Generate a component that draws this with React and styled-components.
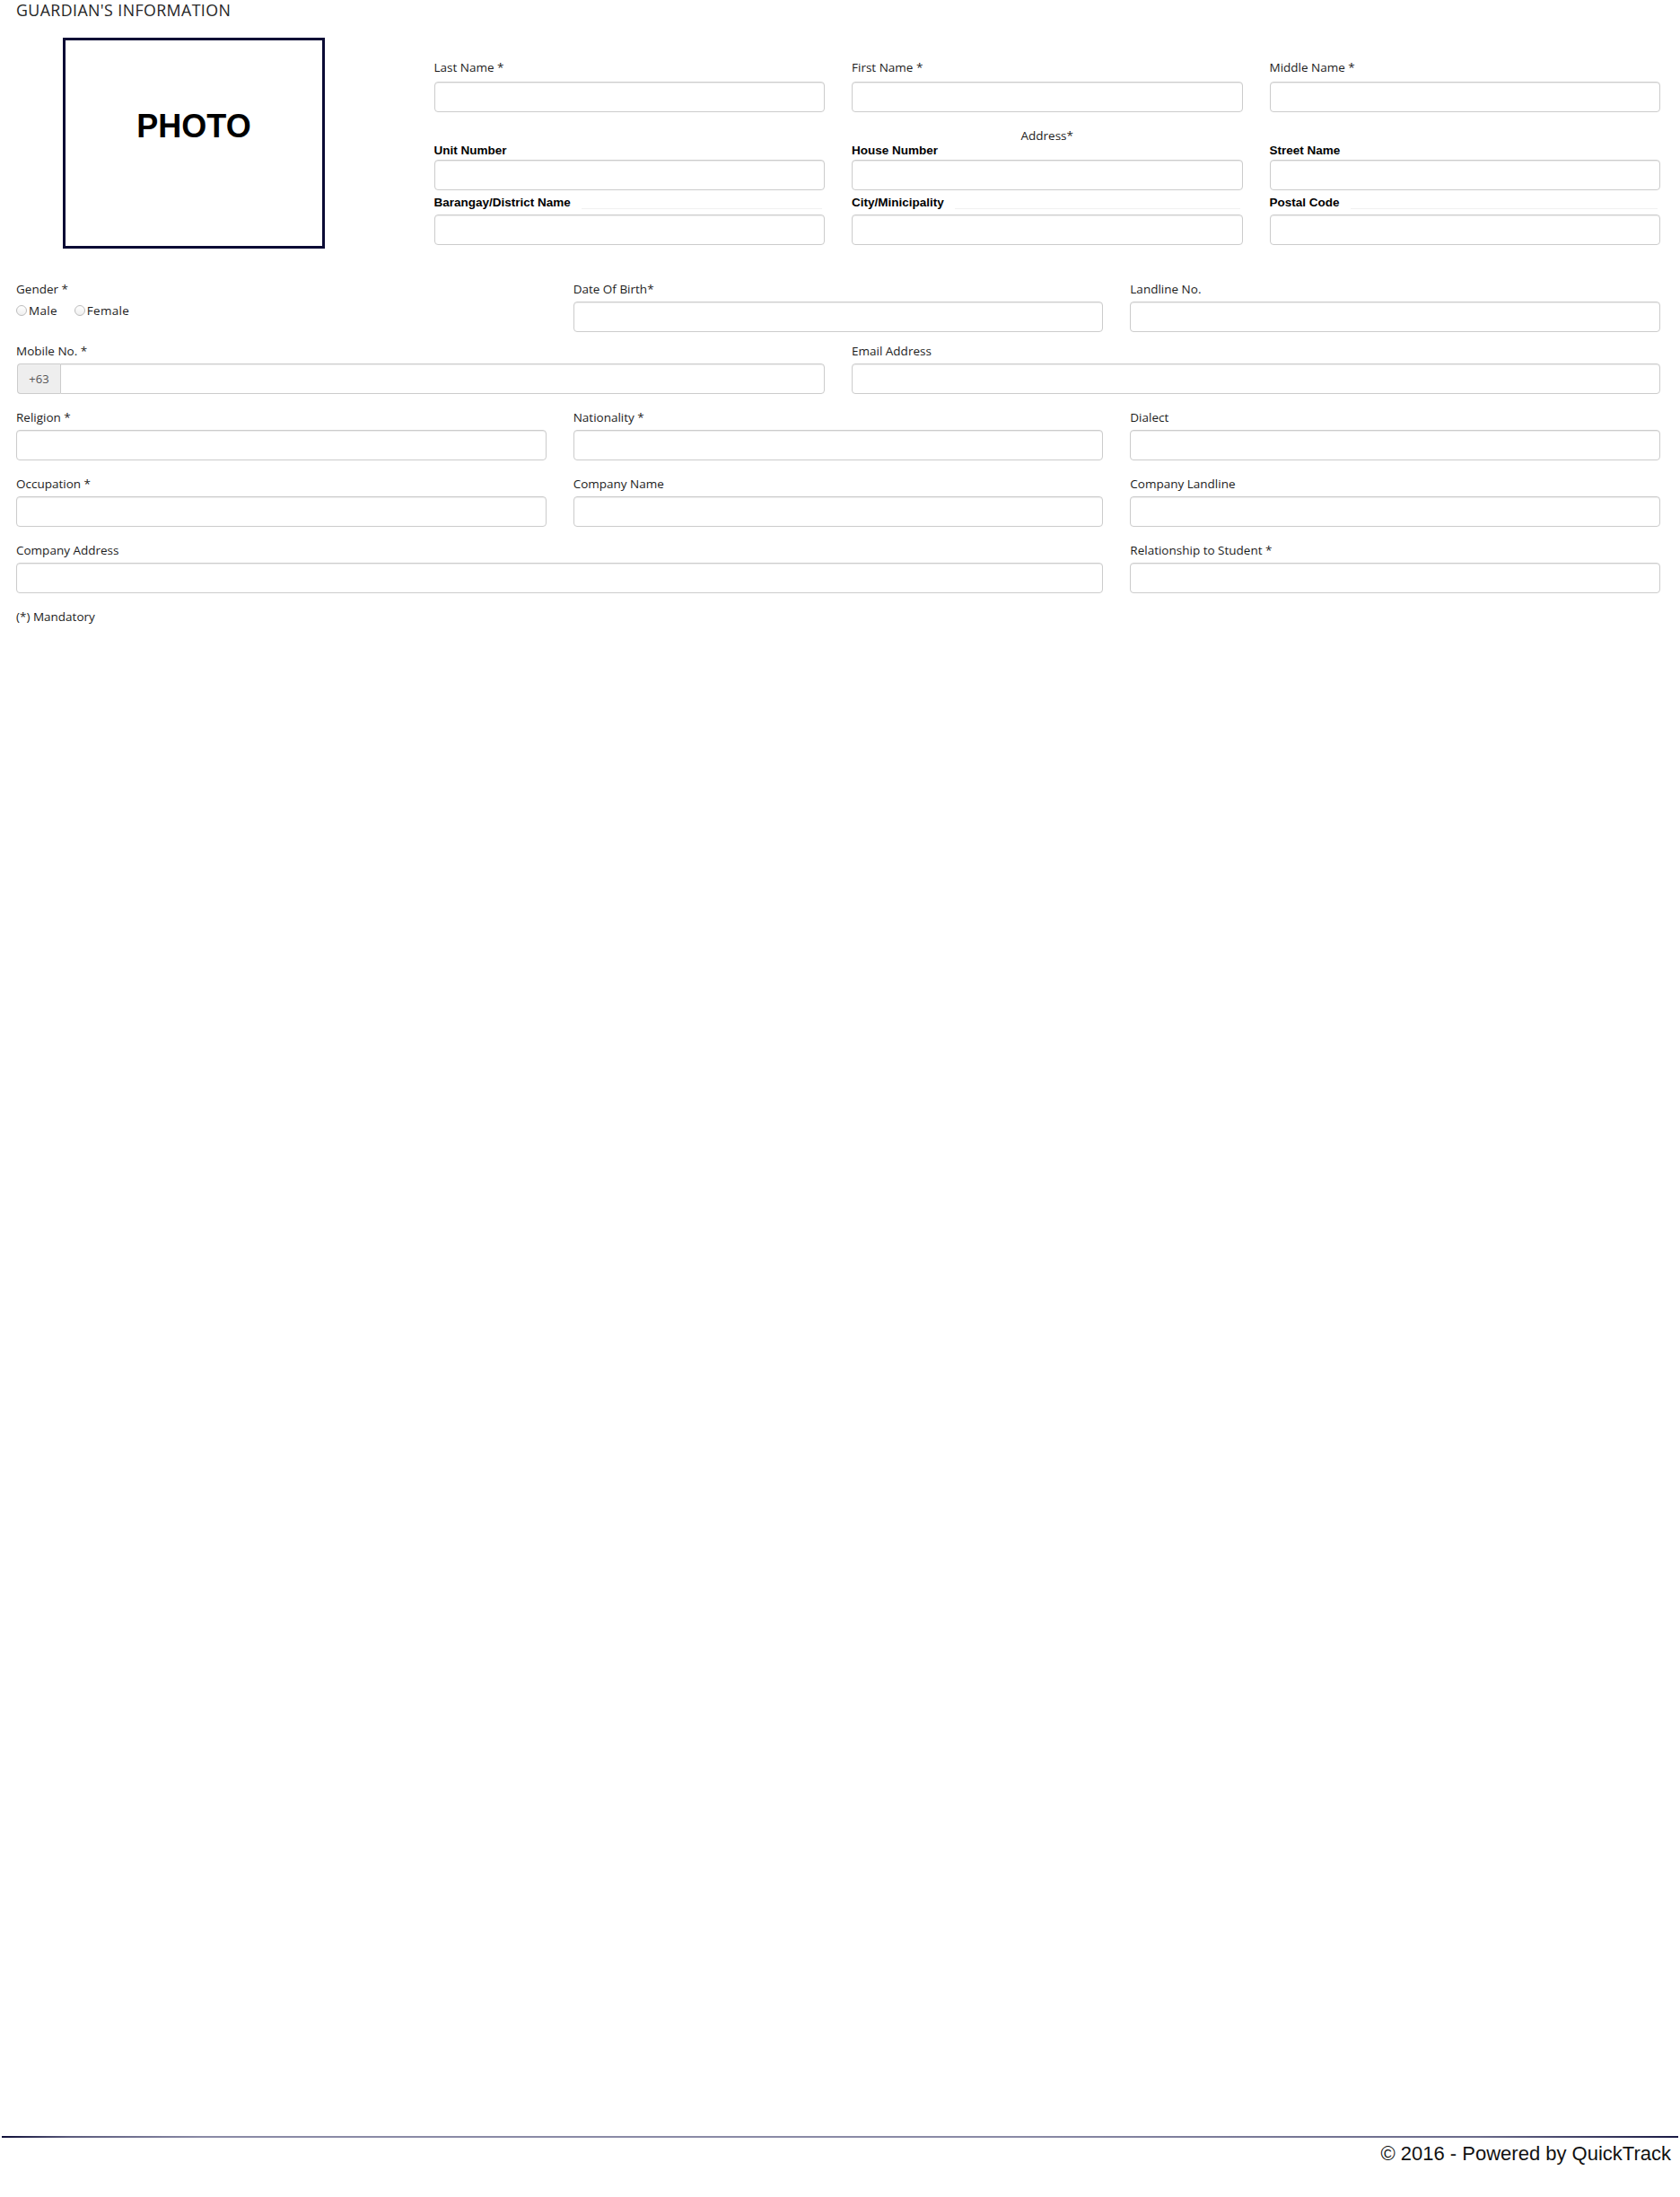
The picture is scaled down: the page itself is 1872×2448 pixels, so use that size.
import React from 'react';
import styled, { createGlobalStyle } from 'styled-components';

const GlobalStyle = createGlobalStyle`
  html, body { margin: 0; padding: 0; background: #fff; }
  body {
    font-family: "Open Sans", "Liberation Sans", Arial, sans-serif;
    color: #1c1c1c;
  }
  *, *::before, *::after { box-sizing: border-box; }
`;

const Page = styled.div`
  min-height: 100vh;
  display: flex;
  flex-direction: column;
`;

const Main = styled.main`
  flex: 1;
  padding: 0 22px 0 18px;
`;

const Title = styled.h2`
  margin: 0;
  font-size: 17.8px;
  line-height: 22px;
  font-weight: 400;
  text-transform: uppercase;
  letter-spacing: 0.4px;
  color: #262626;
`;

const TopSection = styled.section`
  display: grid;
  grid-template-columns: 435.5px 1fr;
  column-gap: 30px;
  margin-top: 20px;
`;

const PhotoCol = styled.div`
  padding-left: 52px;
`;

const PhotoBox = styled.div`
  width: 292px;
  height: 235px;
  border: 3px solid #0b0b35;
  padding-top: 74px;
  text-align: center;
  font-family: "Liberation Sans", Arial, sans-serif;
  font-weight: 700;
  font-size: 36px;
  line-height: 44px;
  color: #000;
`;

const DetailsCol = styled.div`
  padding-top: 23px;
`;

const ThreeGrid = styled.div`
  display: grid;
  grid-template-columns: repeat(3, 1fr);
  column-gap: 30px;
`;

const Label = styled.label`
  display: block;
  font-size: 13.5px;
  line-height: 20px;
  color: #1c1c1c;
  margin-bottom: ${(p) => p.$gap ?? 4}px;
`;

const Input = styled.input`
  display: block;
  width: 100%;
  height: 34px;
  margin: 0;
  padding: 6px 12px;
  border: 1px solid #ccc;
  border-radius: 4px;
  background: #fff;
  box-shadow: inset 0 1px 1px rgba(0, 0, 0, 0.075);
  font-family: inherit;
  font-size: 13px;
  color: #555;
  outline: none;
`;

const AddressHeading = styled.div`
  grid-column: 1 / -1;
  margin-top: 17px;
  text-align: center;
  font-size: 13.5px;
  line-height: 18px;
  color: #1c1c1c;
`;

const AddrField = styled.div`
  margin-top: ${(p) => (p.$second ? 6 : 0)}px;
`;

const AddrLabel = styled.label`
  display: flex;
  align-items: flex-end;
  font-family: "Liberation Sans", Arial, sans-serif;
  font-weight: 700;
  font-size: 13.5px;
  line-height: 16px;
  color: #000;
  margin-bottom: ${(p) => (p.$second ? 5 : 2)}px;
  white-space: nowrap;

  &::after {
    content: "";
    flex: 1;
    height: 1px;
    margin: 0 3px 1px 12px;
    background: ${(p) => (p.$second ? '#f1f1f1' : 'transparent')};
  }
`;

const FormGrid = styled.section`
  display: grid;
  grid-template-columns: repeat(6, 1fr);
  column-gap: 30px;
  row-gap: 16px;
  margin-top: 35px;
`;

const Field = styled.div`
  grid-column: span ${(p) => p.$span};
  margin-top: ${(p) => p.$lift ?? 0}px;
`;

const RadioRow = styled.div`
  display: flex;
  align-items: center;
  height: 20px;
  font-size: 13.5px;
  line-height: 20px;
  color: #1c1c1c;
`;

const RadioOption = styled.label`
  display: inline-flex;
  align-items: center;
  margin-right: 19px;
  letter-spacing: 0.3px;
`;

const RadioCircle = styled.span`
  display: inline-block;
  width: 12px;
  height: 12px;
  margin-right: 2px;
  border-radius: 50%;
  border: 1px solid #bdbdbd;
  background: linear-gradient(#ffffff, #efefef);
`;

const InputGroup = styled.div`
  display: flex;
  padding-left: 1px;
`;

const Addon = styled.span`
  flex: 0 0 48px;
  display: flex;
  align-items: center;
  justify-content: center;
  height: 34px;
  background: #eee;
  border: 1px solid #ccc;
  border-right: 0;
  border-radius: 4px 0 0 4px;
  font-size: 13px;
  color: #555;
`;

const GroupInput = styled(Input)`
  flex: 1;
  border-radius: 0 4px 4px 0;
`;

const Note = styled.div`
  grid-column: 1 / -1;
  font-size: 13.5px;
  line-height: 20px;
  color: #1c1c1c;
`;

const Footer = styled.footer`
  padding: 0 2px;
`;

const FooterRule = styled.div`
  height: 2px;
  background: linear-gradient(
    to right,
    #0e0e38 0%,
    #5a5a7c 4%,
    #8a8aa6 12%,
    #8a8aa6 60%,
    #6a6a8a 88%,
    #1a1a44 100%
  );
`;

const FooterText = styled.div`
  padding: 5px 8px 35px 0;
  text-align: right;
  font-family: "Liberation Sans", Arial, sans-serif;
  font-size: 22px;
  line-height: 26px;
  color: #111;
`;

const nameFields = ['Last Name *', 'First Name *', 'Middle Name *'];
const addrRow1 = ['Unit Number', 'House Number', 'Street Name'];
const addrRow2 = ['Barangay/District Name', 'City/Minicipality', 'Postal Code'];

export default function App() {
  return (
    <Page>
      <GlobalStyle />
      <Main>
        <Title>Guardian's Information</Title>
        <TopSection>
          <PhotoCol>
            <PhotoBox>PHOTO</PhotoBox>
          </PhotoCol>
          <DetailsCol>
            <ThreeGrid>
              {nameFields.map((n) => (
                <div key={n}>
                  <Label $gap={6}>{n}</Label>
                  <Input type="text" />
                </div>
              ))}
            </ThreeGrid>
            <ThreeGrid>
              <AddressHeading>Address*</AddressHeading>
              {addrRow1.map((n) => (
                <AddrField key={n}>
                  <AddrLabel>{n}</AddrLabel>
                  <Input type="text" />
                </AddrField>
              ))}
              {addrRow2.map((n) => (
                <AddrField key={n} $second>
                  <AddrLabel $second>{n}</AddrLabel>
                  <Input type="text" />
                </AddrField>
              ))}
            </ThreeGrid>
          </DetailsCol>
        </TopSection>

        <FormGrid>
          <Field $span={2}>
            <Label>Gender *</Label>
            <RadioRow>
              <RadioOption>
                <RadioCircle />
                Male
              </RadioOption>
              <RadioOption>
                <RadioCircle />
                Female
              </RadioOption>
            </RadioRow>
          </Field>
          <Field $span={2}>
            <Label>Date Of Birth*</Label>
            <Input type="text" />
          </Field>
          <Field $span={2}>
            <Label>Landline No.</Label>
            <Input type="text" />
          </Field>

          <Field $span={3} $lift={-5}>
            <Label>Mobile No. *</Label>
            <InputGroup>
              <Addon>+63</Addon>
              <GroupInput type="text" />
            </InputGroup>
          </Field>
          <Field $span={3} $lift={-5}>
            <Label>Email Address</Label>
            <Input type="text" />
          </Field>

          <Field $span={2}>
            <Label>Religion *</Label>
            <Input type="text" />
          </Field>
          <Field $span={2}>
            <Label>Nationality *</Label>
            <Input type="text" />
          </Field>
          <Field $span={2}>
            <Label>Dialect</Label>
            <Input type="text" />
          </Field>

          <Field $span={2}>
            <Label>Occupation *</Label>
            <Input type="text" />
          </Field>
          <Field $span={2}>
            <Label>Company Name</Label>
            <Input type="text" />
          </Field>
          <Field $span={2}>
            <Label>Company Landline</Label>
            <Input type="text" />
          </Field>

          <Field $span={4}>
            <Label>Company Address</Label>
            <Input type="text" />
          </Field>
          <Field $span={2}>
            <Label>Relationship to Student *</Label>
            <Input type="text" />
          </Field>

          <Note>(*) Mandatory</Note>
        </FormGrid>
      </Main>
      <Footer>
        <FooterRule />
        <FooterText>© 2016 - Powered by QuickTrack</FooterText>
      </Footer>
    </Page>
  );
}
